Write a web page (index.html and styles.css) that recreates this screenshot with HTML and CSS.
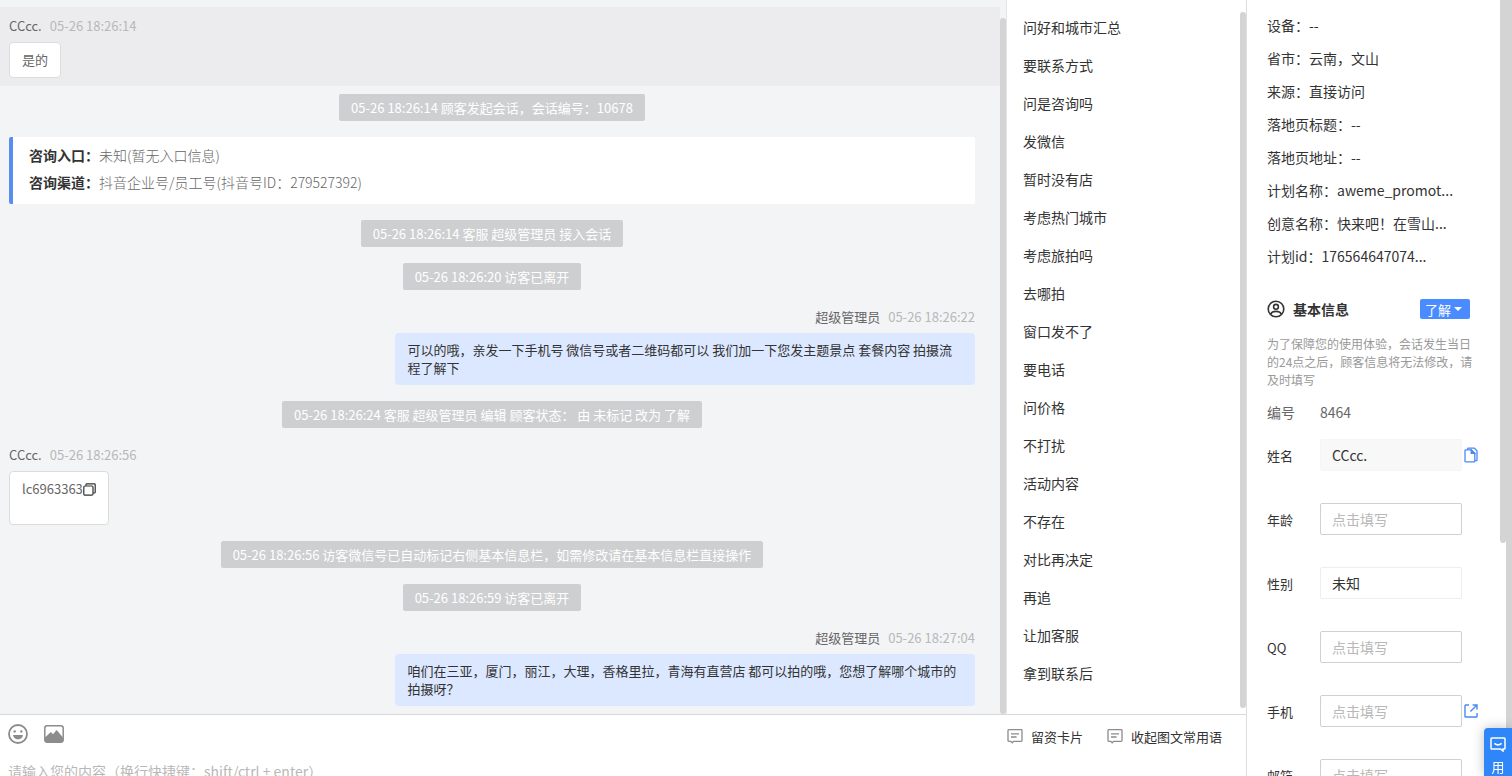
FILE: index.html
```html
<!DOCTYPE html>
<html lang="zh-CN">
<head>
    <meta charset="UTF-8">
    <meta name="viewport" content="width=device-width, initial-scale=1.0">
    <title>会话详情</title>
    <link rel="stylesheet" href="styles.css">
</head>
<body>
    <main class="workspace">
        <div class="panels">
            <!-- 会话消息 -->
            <section class="chat">
                <div class="chat-list">
                    <div class="message current">
                        <div class="message-head"><span class="name">CCcc.</span><time>05-26 18:26:14</time></div>
                        <div class="bubble">是的</div>
                    </div>
                    <p class="notice">05-26 18:26:14 顾客发起会话，会话编号：10678</p>
                    <div class="entry">
                        <p><b>咨询入口：</b>未知(暂无入口信息)</p>
                        <p><b>咨询渠道：</b>抖音企业号/员工号(抖音号ID：279527392)</p>
                    </div>
                    <p class="notice">05-26 18:26:14 客服 超级管理员 接入会话</p>
                    <p class="notice">05-26 18:26:20 访客已离开</p>
                    <div class="message mine">
                        <div class="message-head"><span class="name">超级管理员</span><time>05-26 18:26:22</time></div>
                        <div class="bubble">可以的哦，亲发一下手机号 微信号或者二维码都可以 我们加一下您发主题景点 套餐内容 拍摄流程了解下</div>
                    </div>
                    <p class="notice">05-26 18:26:24 客服 超级管理员 编辑 顾客状态： 由 未标记 改为 了解</p>
                    <div class="message">
                        <div class="message-head"><span class="name">CCcc.</span><time>05-26 18:26:56</time></div>
                        <div class="bubble contact">
                            <span>lc6963363</span>
                            <button class="icon-button dark" type="button" aria-label="复制">
                                <svg width="13" height="13" viewBox="0 0 13 13" fill="none" stroke="currentColor" stroke-width="1.2"><rect x="0.8" y="3" width="9.2" height="9.2" rx="1.2"/><path d="M3 2.8V1.6Q3 0.8 3.8 0.8H11.4Q12.2 0.8 12.2 1.6V9.2Q12.2 10 11.4 10H10.2"/></svg>
                            </button>
                        </div>
                    </div>
                    <p class="notice">05-26 18:26:56 访客微信号已自动标记右侧基本信息栏，如需修改请在基本信息栏直接操作</p>
                    <p class="notice">05-26 18:26:59 访客已离开</p>
                    <div class="message mine">
                        <div class="message-head"><span class="name">超级管理员</span><time>05-26 18:27:04</time></div>
                        <div class="bubble">咱们在三亚，厦门，丽江，大理，香格里拉，青海有直营店 都可以拍的哦，您想了解哪个城市的拍摄呀？</div>
                    </div>
                </div>
                <div class="scrollbar chat-scroll"></div>
            </section>

            <!-- 常用语 -->
            <section class="phrases">
                <ul>
                    <li>问好和城市汇总</li>
                    <li>要联系方式</li>
                    <li>问是咨询吗</li>
                    <li>发微信</li>
                    <li>暂时没有店</li>
                    <li>考虑热门城市</li>
                    <li>考虑旅拍吗</li>
                    <li>去哪拍</li>
                    <li>窗口发不了</li>
                    <li>要电话</li>
                    <li>问价格</li>
                    <li>不打扰</li>
                    <li>活动内容</li>
                    <li>不存在</li>
                    <li>对比再决定</li>
                    <li>再追</li>
                    <li>让加客服</li>
                    <li>拿到联系后</li>
                </ul>
                <div class="scrollbar phrases-scroll"></div>
            </section>
        </div>

        <!-- 输入区 -->
        <section class="composer">
            <div class="toolbar">
                <button class="icon-button" type="button" aria-label="表情">
                    <svg width="20" height="20" viewBox="0 0 20 20"><circle cx="10" cy="10" r="9" fill="none" stroke="currentColor" stroke-width="1.8"/><circle cx="6.7" cy="7.4" r="1.2" fill="currentColor"/><circle cx="13.3" cy="7.4" r="1.2" fill="currentColor"/><path d="M5 11H15Q14.2 15.4 10 15.4T5 11Z" fill="currentColor"/></svg>
                </button>
                <button class="icon-button" type="button" aria-label="图片">
                    <svg width="20" height="18" viewBox="0 0 20 18"><rect x="0.8" y="0.8" width="18.4" height="16.4" rx="2.4" fill="none" stroke="currentColor" stroke-width="1.5"/><path d="M1 12.5L6.8 7L9 9.2L12.6 5L19 12.5V15Q19 17 17 17H3Q1 17 1 15Z" fill="currentColor"/></svg>
                </button>
                <div class="toolbar-right">
                    <button class="text-button" type="button">
                        <svg width="16" height="16" viewBox="0 0 16 16" fill="none" stroke="#8c8c8c" stroke-width="1.3"><path d="M1.7 1.7H14.3Q15 1.7 15 2.4V12.6Q15 13.3 14.3 13.3H6.6L5.2 14.8L3.8 13.3H1.7Q1 13.3 1 12.6V2.4Q1 1.7 1.7 1.7ZM4 5.8H12M4 9H9.6"/></svg>
                        留资卡片
                    </button>
                    <button class="text-button" type="button">
                        <svg width="16" height="16" viewBox="0 0 16 16" fill="none" stroke="#8c8c8c" stroke-width="1.3"><path d="M1.7 1.7H14.3Q15 1.7 15 2.4V12.6Q15 13.3 14.3 13.3H6.6L5.2 14.8L3.8 13.3H1.7Q1 13.3 1 12.6V2.4Q1 1.7 1.7 1.7ZM4 5.8H12M4 9H9.6"/></svg>
                        收起图文常用语
                    </button>
                </div>
            </div>
            <textarea aria-label="消息内容" rows="2" placeholder="请输入您的内容（换行快捷键：shift/ctrl + enter）"></textarea>
        </section>
    </main>

    <!-- 顾客信息 -->
    <aside class="profile">
        <div class="profile-body">
            <ul class="source">
                <li>设备：--</li>
                <li>省市：云南，文山</li>
                <li>来源：直接访问</li>
                <li>落地页标题：--</li>
                <li>落地页地址：--</li>
                <li>计划名称：aweme_promot...</li>
                <li>创意名称：快来吧！在雪山...</li>
                <li>计划id：176564647074...</li>
            </ul>

            <div class="profile-title">
                <svg width="18" height="18" viewBox="0 0 18 18" fill="none" stroke="#333" stroke-width="1.6"><circle cx="9" cy="9" r="7.8"/><circle cx="9" cy="6.8" r="2.4"/><path d="M3.6 14.4Q4.6 11.4 9 11.4T14.4 14.4"/></svg>
                <h2>基本信息</h2>
                <div class="status">
                    <select aria-label="顾客状态"><option>了解</option></select>
                    <span class="caret"></span>
                </div>
            </div>
            <p class="tip">为了保障您的使用体验，会话发生当日的24点之后，顾客信息将无法修改，请及时填写</p>

            <form class="fields">
                <div class="number"><span>编号</span><span>8464</span></div>
                <div class="field">
                    <label for="name">姓名</label>
                    <input class="filled" id="name" type="text" value="CCcc.">
                    <button class="icon-button blue" type="button" aria-label="复制姓名">
                        <svg width="14" height="16" viewBox="0 0 14 16" fill="none" stroke="currentColor" stroke-width="1.3"><path d="M3.6 2.8V1.8Q3.6 1.2 4.2 1.2H10.4L13 3.8V13Q13 13.6 12.4 13.6H11"/><path d="M1.6 2.8H7.2L10.8 6.4V14.2Q10.8 14.8 10.2 14.8H1.6Q1 14.8 1 14.2V3.4Q1 2.8 1.6 2.8Z"/><path d="M7.2 2.8V6.4H10.8Z" fill="currentColor"/></svg>
                    </button>
                </div>
                <div class="field">
                    <label for="age">年龄</label>
                    <input id="age" type="text" placeholder="点击填写">
                </div>
                <div class="field">
                    <label for="gender">性别</label>
                    <select id="gender"><option>未知</option></select>
                </div>
                <div class="field">
                    <label for="qq">QQ</label>
                    <input id="qq" type="text" placeholder="点击填写">
                </div>
                <div class="field">
                    <label for="phone">手机</label>
                    <input id="phone" type="text" placeholder="点击填写">
                    <button class="icon-button blue" type="button" aria-label="查看手机">
                        <svg width="14" height="14" viewBox="0 0 14 14" fill="none" stroke="currentColor" stroke-width="1.4"><path d="M5 1H1.6Q1 1 1 1.6V12.4Q1 13 1.6 13H12.4Q13 13 13 12.4V9M8.6 1H13V5.4M13 1L6.4 7.6"/></svg>
                    </button>
                </div>
                <div class="field">
                    <label for="email">邮箱</label>
                    <input id="email" type="text" placeholder="点击填写">
                </div>
            </form>
        </div>
        <div class="scrollbar profile-scroll"></div>
        <div class="page-scroll"></div>
    </aside>

    <button class="feedback" type="button">
        <svg width="16" height="15" viewBox="0 0 16 15" fill="none" stroke="currentColor" stroke-width="1.5"><path d="M1.8 1H14.2Q15 1 15 1.8V11.2Q15 12 14.2 12H13V14L10.4 12H1.8Q1 12 1 11.2V1.8Q1 1 1.8 1Z"/><path d="M4.4 6.4Q8 9.4 11.6 6.4"/></svg>
        <span>用</span>
    </button>
</body>
</html>
```

FILE: styles.css
```css
* {
    box-sizing: border-box;
}
body {
    display: flex;
    height: 100vh;
    margin: 0;
    overflow: hidden;
    background-color: #fff;
    color: #333;
    font-family: "Noto Sans CJK SC", sans-serif;
    font-size: 14px;
}
button, input, select, textarea {
    font-family: inherit;
    font-size: inherit;
    color: inherit;
}
button {
    padding: 0;
    border: none;
    background: none;
    cursor: pointer;
}
p, h2, ul {
    margin: 0;
    padding: 0;
}
ul {
    list-style: none;
}
svg {
    display: block;
    flex: none;
}
.workspace {
    flex: 1;
    display: flex;
    flex-direction: column;
    min-width: 0;
}
.panels {
    flex: 1;
    display: flex;
    min-height: 0;
}
.scrollbar {
    flex: none;
    width: 6px;
    border-radius: 3px;
    background-color: #d4d4d4;
}

/* 会话消息 */
.chat {
    flex: 1;
    display: flex;
    min-width: 0;
    background-color: #f3f4f6;
    font-size: 13px;
    line-height: 18px;
}
.chat-list {
    flex: 1;
    display: flex;
    flex-direction: column;
    align-items: center;
    gap: 16px;
    min-width: 0;
    padding: 7px 25px 8px 9px;
    overflow: hidden;
}
.chat-list > * {
    flex: none;
}
.chat-scroll {
    margin-top: 18px;
}
.message {
    display: flex;
    flex-direction: column;
    align-items: flex-start;
    align-self: stretch;
}
.message.current {
    margin: 0 -25px -8px -9px;
    padding: 8px 25px 8px 9px;
    background-color: #ececee;
}
.message.mine {
    align-items: flex-end;
}
.message-head {
    display: flex;
    gap: 8px;
    margin-bottom: 5px;
    line-height: 22px;
}
.name {
    color: #666;
}
.message-head time {
    color: #b8b8b8;
}
.bubble {
    max-width: 60%;
    padding: 8px 12px;
    border: 1px solid #dcdcdc;
    border-radius: 4px;
    background-color: #fff;
    color: #666;
}
.mine .bubble {
    border: none;
    background-color: #dce8ff;
    color: #333;
}
.contact {
    display: flex;
    align-items: flex-start;
    min-height: 54px;
}
.contact .icon-button {
    margin-top: 3px;
}
.notice {
    padding: 5px 12px 4px;
    border-radius: 2px;
    background-color: #cecfd1;
    color: #fff;
}
.entry {
    align-self: stretch;
    padding: 5px 16px 8px;
    border-left: 4px solid #5a8df0;
    border-radius: 2px;
    background-color: #fff;
    font-size: 14px;
    font-weight: 300;
    line-height: 27px;
    color: #666;
}
.entry b {
    font-weight: 700;
    color: #333;
}

/* 常用语 */
.phrases {
    flex: none;
    display: flex;
    width: 240px;
    border-left: 1px solid #e4e4e4;
}
.phrases ul {
    flex: 1;
    padding: 8px 16px;
}
.phrases li {
    line-height: 38px;
}
.phrases-scroll {
    margin: 12px 0 6px;
}

/* 输入区 */
.composer {
    flex: none;
    height: 62px;
    border-top: 1px solid #d9d9d9;
    overflow: hidden;
}
.toolbar {
    display: flex;
    align-items: center;
    gap: 16px;
    height: 38px;
    padding: 0 24px 0 8px;
}
.icon-button {
    flex: none;
    color: #8c8c8c;
}
.icon-button.dark {
    color: #333;
}
.icon-button.blue {
    color: #4a8af4;
}
.toolbar-right {
    display: flex;
    gap: 24px;
    margin-left: auto;
    padding-top: 4px;
}
.text-button {
    display: flex;
    align-items: center;
    gap: 8px;
    font-size: 13px;
}
.composer textarea {
    display: block;
    width: 100%;
    padding: 8px;
    border: none;
    outline: none;
    resize: none;
    line-height: 20px;
}
::placeholder {
    color: #b8b8b8;
}

/* 顾客信息 */
.profile {
    flex: none;
    display: flex;
    width: 266px;
    border-left: 1px solid #dedede;
}
.profile-body {
    flex: 1;
    padding: 9px 20px 0;
    overflow: hidden;
}
.profile-scroll {
    height: 70vh;
    border-radius: 0 0 3px 3px;
}
.page-scroll {
    flex: none;
    width: 6px;
    background-color: #d4d4d4;
}
.source li {
    line-height: 33px;
}
.profile-title {
    display: flex;
    align-items: center;
    gap: 8px;
    margin-top: 26px;
    padding-right: 10px;
}
.profile-title h2 {
    font-size: 14px;
    line-height: 20px;
}
.status {
    position: relative;
    margin-left: auto;
}
.status select {
    display: block;
    width: 50px;
    height: 20px;
    padding: 0 5px;
    border: none;
    border-radius: 2px;
    appearance: none;
    background-color: #4a8cff;
    color: #fff;
    font-size: 13px;
}
.caret {
    position: absolute;
    top: 8px;
    right: 8px;
    border: 4px solid transparent;
    border-top-color: #fff;
    border-bottom: none;
    pointer-events: none;
}
.tip {
    margin-top: 16px;
    color: #999;
    font-size: 12px;
    line-height: 18px;
}
.number {
    display: flex;
    margin: 13px 0 17px;
    line-height: 20px;
    color: #666;
}
.number span:first-child, .field label {
    flex: none;
    width: 53px;
}
.field {
    display: flex;
    align-items: center;
    height: 32px;
    margin: 0 -10px 32px 0;
}
.field label {
    font-size: 13px;
}
.field input, .field select {
    width: 142px;
    height: 32px;
    padding: 0 11px;
    border: 1px solid #d0d0d0;
    border-radius: 2px;
    background-color: #fff;
}
.field select {
    appearance: none;
    border-color: #eee;
}
.field input.filled {
    border-color: #f5f5f5;
    background-color: #f8f8f8;
}
.field .icon-button {
    margin-left: 2px;
}

/* 右下角浮动按钮 */
.feedback {
    position: fixed;
    right: 0;
    bottom: 0;
    display: flex;
    flex-direction: column;
    align-items: center;
    gap: 6px;
    width: 28px;
    height: 48px;
    padding-top: 9px;
    border-radius: 4px 0 0 0;
    background-color: #2f86f9;
    box-shadow: 0 0 12px rgba(0, 0, 0, 0.25);
    color: #fff;
    font-size: 13px;
    line-height: 18px;
}
```
